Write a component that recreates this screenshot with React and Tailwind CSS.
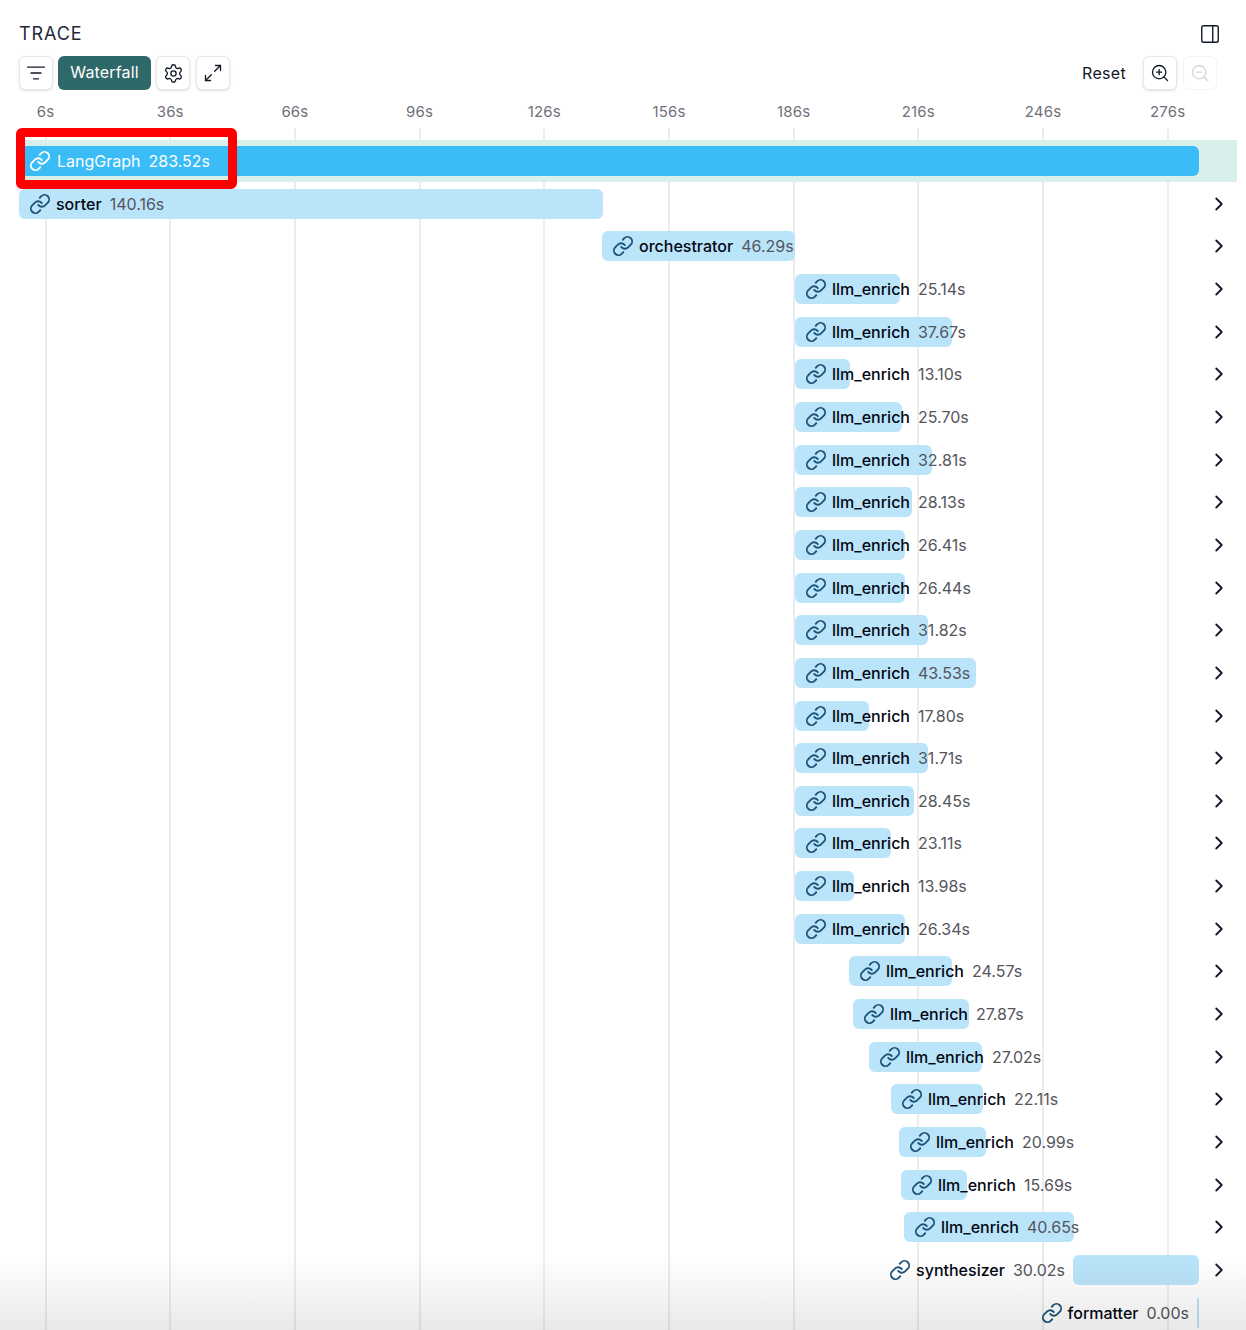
import React from 'react';
import {
  ChevronRight,
  Link as LinkIcon,
  ListFilter,
  Maximize2,
  PanelRight,
  Settings,
  ZoomIn,
  ZoomOut,
} from 'lucide-react';

const ticks = ['6s', '36s', '66s', '96s', '126s', '156s', '186s', '216s', '246s', '276s'];

const rows = [
  { name: 'sorter', dur: '140.16s', left: 19, right: 603 },
  { name: 'orchestrator', dur: '46.29s', left: 602, right: 795 },
  { name: 'llm_enrich', dur: '25.14s', left: 795, right: 900 },
  { name: 'llm_enrich', dur: '37.67s', left: 795, right: 952 },
  { name: 'llm_enrich', dur: '13.10s', left: 795, right: 850 },
  { name: 'llm_enrich', dur: '25.70s', left: 795, right: 902 },
  { name: 'llm_enrich', dur: '32.81s', left: 795, right: 932 },
  { name: 'llm_enrich', dur: '28.13s', left: 795, right: 912 },
  { name: 'llm_enrich', dur: '26.41s', left: 795, right: 905 },
  { name: 'llm_enrich', dur: '26.44s', left: 795, right: 905 },
  { name: 'llm_enrich', dur: '31.82s', left: 795, right: 928 },
  { name: 'llm_enrich', dur: '43.53s', left: 795, right: 976 },
  { name: 'llm_enrich', dur: '17.80s', left: 795, right: 869 },
  { name: 'llm_enrich', dur: '31.71s', left: 795, right: 928 },
  { name: 'llm_enrich', dur: '28.45s', left: 795, right: 914 },
  { name: 'llm_enrich', dur: '23.11s', left: 795, right: 891 },
  { name: 'llm_enrich', dur: '13.98s', left: 795, right: 854 },
  { name: 'llm_enrich', dur: '26.34s', left: 795, right: 905 },
  { name: 'llm_enrich', dur: '24.57s', left: 849, right: 952 },
  { name: 'llm_enrich', dur: '27.87s', left: 853, right: 969 },
  { name: 'llm_enrich', dur: '27.02s', left: 869, right: 982 },
  { name: 'llm_enrich', dur: '22.11s', left: 891, right: 983 },
  { name: 'llm_enrich', dur: '20.99s', left: 899, right: 986 },
  { name: 'llm_enrich', dur: '15.69s', left: 901, right: 967 },
  { name: 'llm_enrich', dur: '40.65s', left: 904, right: 1074 },
  { name: 'synthesizer', dur: '30.02s', left: 1073, right: 1199, outside: true },
  { name: 'formatter', dur: '0.00s', left: 1197, right: 1199, outside: true, leaf: true },
];

const ToolButton = ({ children, muted }) => (
  <button
    className={`flex h-[34px] w-[34px] items-center justify-center rounded-md border bg-white ${
      muted ? 'border-gray-100 text-gray-300' : 'border-gray-200 text-gray-900 shadow-sm'
    }`}
  >
    {children}
  </button>
);

const SpanLabel = ({ name, dur }) => (
  <span className="flex items-center whitespace-nowrap">
    <LinkIcon size={22} strokeWidth={2} className="shrink-0 text-[#1c5379]" />
    <span className="ml-[5px] font-[450] text-gray-950">{name}</span>
    <span className="ml-2 text-[#55555c]">{dur}</span>
  </span>
);

const SpanRow = ({ name, dur, left, right, outside, leaf }) => (
  <div className="flex h-[42.67px] items-center">
    {outside ? (
      <div className="flex w-[1199px] shrink-0 items-center justify-end gap-2">
        <SpanLabel name={name} dur={dur} />
        <div className="h-[30px] rounded-md bg-[#bae4fa]" style={{ width: right - left }} />
      </div>
    ) : (
      <div className="w-[1199px] shrink-0">
        <div
          className="flex h-[30px] items-center rounded-md bg-[#bae4fa] pl-[10px]"
          style={{ marginLeft: left, width: right - left }}
        >
          <SpanLabel name={name} dur={dur} />
        </div>
      </div>
    )}
    {!leaf && <ChevronRight size={22} strokeWidth={2} className="ml-[9px] text-gray-900" />}
  </div>
);

export default function App() {
  return (
    <div
      className="relative h-[1330px] overflow-hidden bg-white text-base text-gray-900"
      style={{ fontFamily: 'Inter, sans-serif' }}
    >
      <div className="relative z-10 px-[19px] pt-[21px]">
        <div className="flex h-[25px] items-center justify-between">
          <h2 className="text-lg leading-[25px] tracking-[0.05em] text-gray-800">TRACE</h2>
          <PanelRight size={22} strokeWidth={1.5} className="mr-[6px] mt-px text-gray-900" />
        </div>
        <div className="mt-[10px] flex h-[34px] items-center justify-between">
          <div className="flex items-center gap-[5px]">
            <ToolButton>
              <ListFilter size={20} strokeWidth={1.6} />
            </ToolButton>
            <button className="h-[34px] w-[93px] rounded-md bg-[#2f6868] pb-[2px] tracking-[0.01em] text-white">
              Waterfall
            </button>
            <ToolButton>
              <Settings size={21} strokeWidth={1.5} />
            </ToolButton>
            <span className="ml-px">
              <ToolButton>
                <Maximize2 size={20} strokeWidth={1.6} />
              </ToolButton>
            </span>
          </div>
          <div className="mr-[10px] flex items-center gap-[6px]">
            <span className="mr-[11px] tracking-[0.02em]">Reset</span>
            <ToolButton>
              <ZoomIn size={20} strokeWidth={1.6} />
            </ToolButton>
            <ToolButton muted>
              <ZoomOut size={20} strokeWidth={1.6} />
            </ToolButton>
          </div>
        </div>
      </div>

      {/* time axis */}
      <div className="relative z-10 ml-[-16.85px] mt-[10px] flex h-[24px] items-center text-[15px] tracking-[0.01em] text-[#71717a]">
        {ticks.map((t) => (
          <span key={t} className="w-[124.7px] shrink-0 text-center">
            {t}
          </span>
        ))}
      </div>

      {/* grid lines sit behind the rows */}
      <div className="absolute inset-x-0 bottom-0 top-[128px] ml-[-16.85px] flex">
        {ticks.map((t) => (
          <div key={t} className="flex w-[124.7px] shrink-0 justify-center">
            <div className="h-full w-[2px] bg-[#ececec]" />
          </div>
        ))}
      </div>

      <div className="relative mt-[15.67px]">
        <div className="ml-[19px] flex h-[42.67px] w-[1218px] items-center bg-[#d9efec]">
          <div className="flex h-[30px] w-[1180px] items-center rounded-md bg-[#3abcf6] pl-[10px] text-white">
            <LinkIcon size={22} strokeWidth={2} className="shrink-0" />
            <span className="ml-[6px]">LangGraph</span>
            <span className="ml-2">283.52s</span>
          </div>
        </div>
        {rows.map((r, i) => (
          <SpanRow key={i} {...r} />
        ))}
      </div>

      {/* highlight box */}
      <div className="absolute left-[16px] top-[128px] h-[61px] w-[221px] rounded-md border-[9px] border-[#ff0000]" />

      {/* fade at the bottom */}
      <div className="absolute inset-x-0 bottom-0 h-[75px] bg-linear-to-b from-transparent to-[#00000016]" />
    </div>
  );
}
